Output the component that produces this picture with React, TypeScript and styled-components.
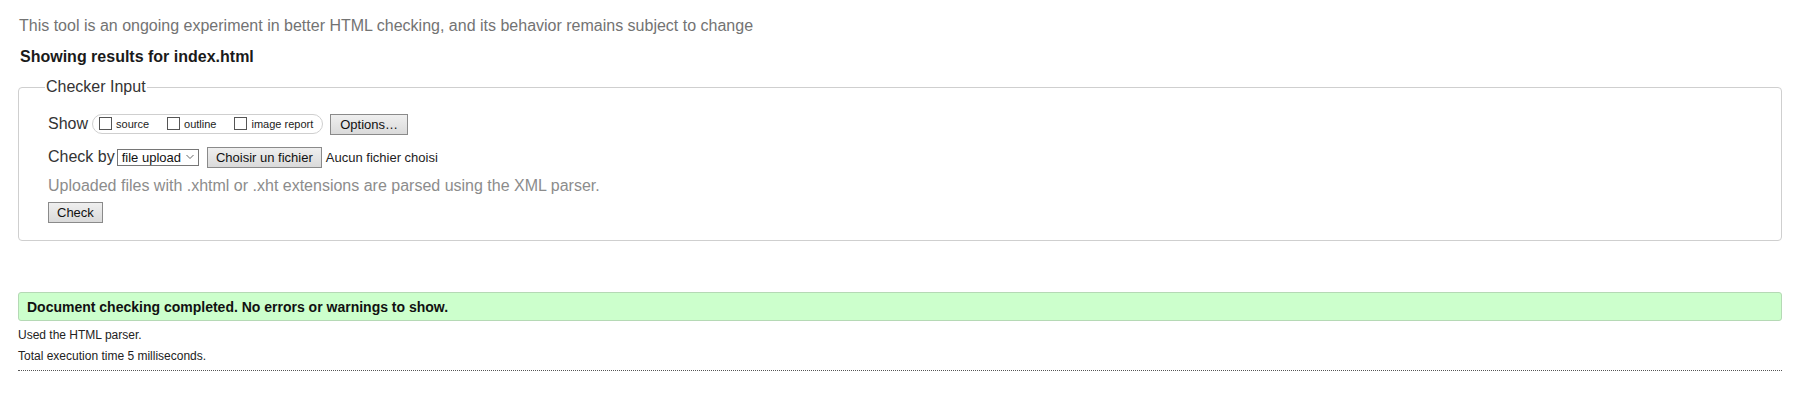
import React from "react";
import styled, { createGlobalStyle } from "styled-components";

const Global = createGlobalStyle`
  html, body { margin: 0; padding: 0; background: #fff; }
  body { font-family: "Liberation Sans", Arial, sans-serif; color: #222; }
`;

const Page = styled.div`
  padding: 16px 21px 0 18px;
`;

const Intro = styled.p`
  margin: 0 0 0 1px;
  font-size: 16px;
  line-height: 20px;
  color: #737373;
`;

const Heading = styled.h2`
  margin: 11px 0 0 2px;
  font-size: 16px;
  line-height: 20px;
  font-weight: bold;
  color: #1a1a1a;
`;

const Fieldset = styled.fieldset`
  margin: 10px 0 0 0;
  padding: 4px 26px 17px 29px;
  border: 1px solid #cfcfcf;
  border-radius: 4px;
`;

const Legend = styled.legend`
  padding: 0 1px;
  margin-left: -3px;
  font-size: 16px;
  line-height: 20px;
  color: #333;
`;

const Row = styled.div<{ $mt?: number }>`
  display: flex;
  align-items: center;
  margin-top: ${(p) => p.$mt ?? 0}px;
  height: 22px;
  font-size: 16px;
  color: #333;
`;

const Label = styled.span<{ $mr?: number }>`
  margin-right: ${(p) => p.$mr ?? 4}px;
`;

const Pill = styled.span`
  display: inline-flex;
  align-items: center;
  height: 18px;
  padding: 0 9px 0 6px;
  border: 1px solid #cfcfcf;
  border-radius: 10px;
  gap: 18px;
`;

const Opt = styled.label`
  display: inline-flex;
  align-items: center;
  gap: 4px;
  font-size: 11px;
  color: #222;
`;

const Box = styled.span`
  display: inline-block;
  width: 11px;
  height: 11px;
  border: 1px solid #555;
  background: #fff;
  margin-top: -2px;
`;

const Button = styled.button<{ $ml?: number; $px?: number }>`
  font-family: "Liberation Sans", Arial, sans-serif;
  font-size: 13px;
  height: 21px;
  margin-left: ${(p) => p.$ml ?? 0}px;
  padding: 0 ${(p) => p.$px ?? 8}px;
  border: 1px solid #8a8a8a;
  border-radius: 0;
  background: linear-gradient(#efefef, #dadada);
  color: #111;
  cursor: default;
`;

const Select = styled.span`
  display: inline-flex;
  align-items: center;
  height: 15px;
  padding: 0 4px 0 4px;
  border: 1px solid #767676;
  font-size: 13px;
  color: #111;
  background: #fff;
  gap: 5px;
`;

const FileName = styled.span`
  margin-left: 4px;
  font-size: 13px;
  color: #222;
`;

const Note = styled.p`
  margin: 8px 0 0 0;
  font-size: 16px;
  line-height: 20px;
  color: #8c8c8c;
`;

const Success = styled.div`
  margin-top: 51px;
  padding: 0 8px;
  height: 27px;
  display: flex;
  align-items: center;
  background: #ccffcc;
  border: 1px solid #b5d9b5;
  border-radius: 3px;
  font-size: 14px;
  font-weight: bold;
  color: #111;
`;

const Details = styled.p`
  margin: 0;
  font-size: 12px;
  line-height: 18px;
  color: #222;
`;

const DetailsList = styled.div`
  margin-top: 5px;
  display: flex;
  flex-direction: column;
  gap: 3px;
  padding-bottom: 5px;
  border-bottom: 1px dotted #555;
`;

const Chevron = () => (
  <svg width="8" height="6" viewBox="0 0 8 6">
    <path d="M0.5 1 L4 4.5 L7.5 1" fill="none" stroke="#666" strokeWidth="1" />
  </svg>
);

export default function App() {
  return (
    <>
      <Global />
      <Page>
        <Intro>This tool is an ongoing experiment in better HTML checking, and its behavior remains subject to change</Intro>
        <Heading>Showing results for index.html</Heading>
        <Fieldset>
          <Legend>Checker Input</Legend>
          <Row $mt={12}>
            <Label>Show</Label>
            <Pill>
              <Opt><Box />source</Opt>
              <Opt><Box />outline</Opt>
              <Opt><Box />image report</Opt>
            </Pill>
            <Button $ml={7} $px={9}>Options…</Button>
          </Row>
          <Row $mt={11}>
            <Label $mr={2}>Check by</Label>
            <Select>file upload <Chevron /></Select>
            <Button $ml={8} $px={8}>Choisir un fichier</Button>
            <FileName>Aucun fichier choisi</FileName>
          </Row>
          <Note>Uploaded files with .xhtml or .xht extensions are parsed using the XML parser.</Note>
          <Row $mt={5}>
            <Button $px={8}>Check</Button>
          </Row>
        </Fieldset>
        <Success>Document checking completed. No errors or warnings to show.</Success>
        <DetailsList>
          <Details>Used the HTML parser.</Details>
          <Details>Total execution time 5 milliseconds.</Details>
        </DetailsList>
      </Page>
    </>
  );
}
